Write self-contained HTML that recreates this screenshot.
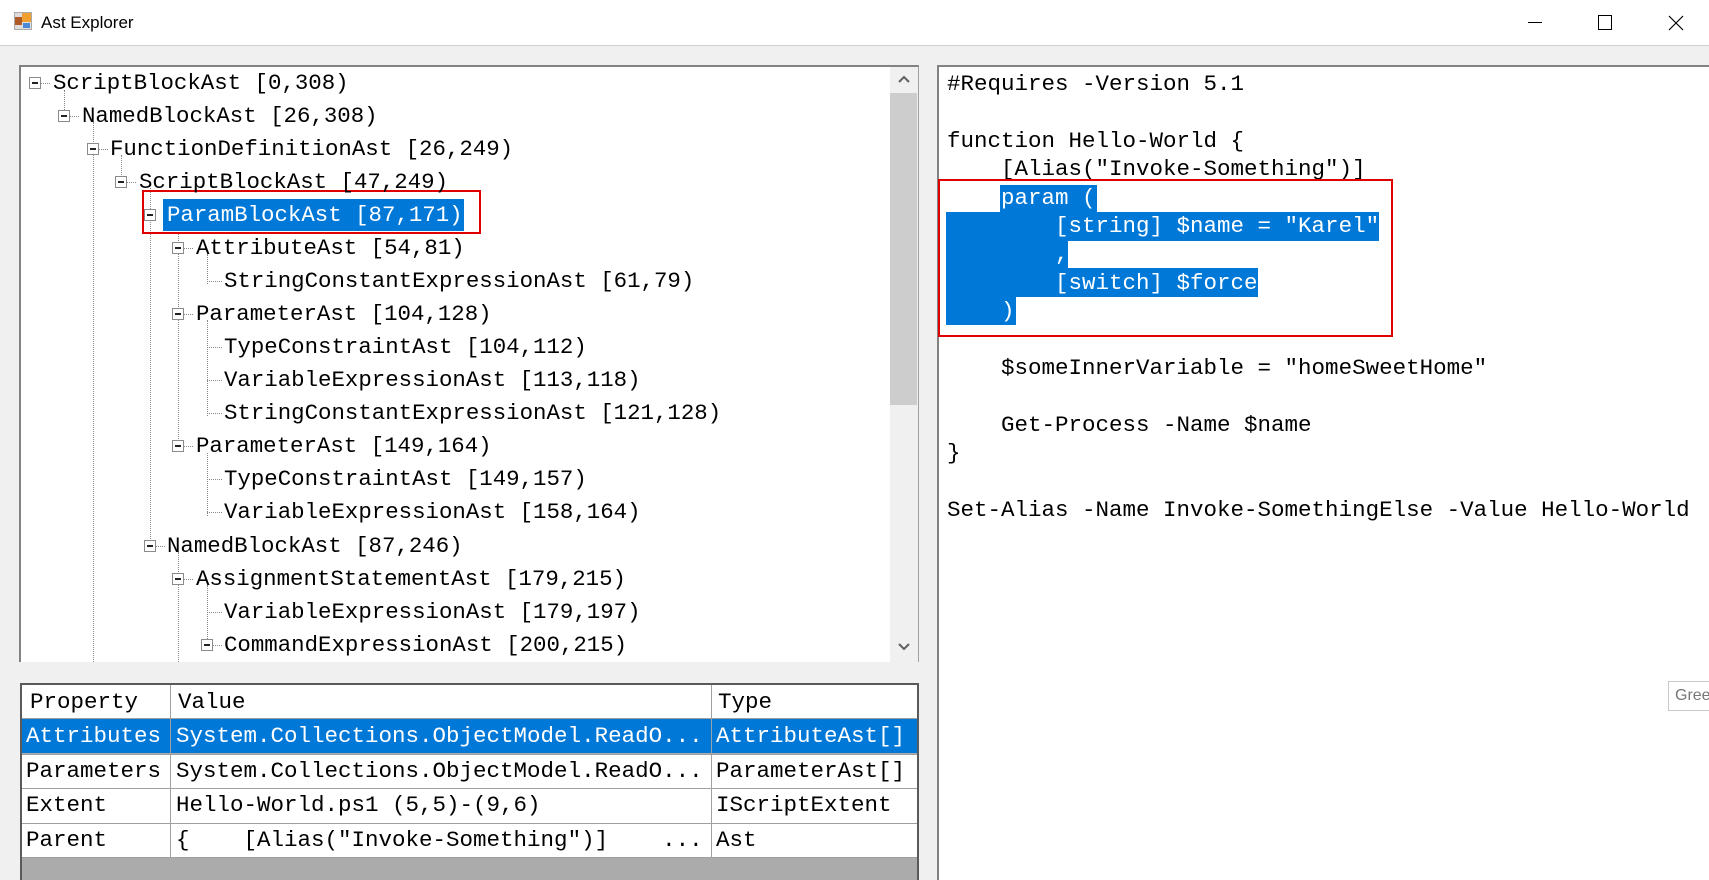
<!DOCTYPE html>
<html><head><meta charset="utf-8"><style>
*{margin:0;padding:0;box-sizing:border-box}
body{width:1709px;height:880px;overflow:hidden;background:#f0f0f0;font-family:"Liberation Mono",monospace;position:relative}
.abs{position:absolute}
#title{left:0;top:0;width:1709px;height:46px;background:#fff;border-bottom:1px solid #d0d0d0}
.t{position:absolute;white-space:pre;font-size:22.4px;height:33px;line-height:33px;color:#000}
.box{position:absolute;width:12px;height:12px;border:1px solid #8a8a8a;background:#fff}
.box:after{content:"";position:absolute;left:2px;top:4px;width:6px;height:2px;background:#222}
.h{position:absolute;height:0;border-top:1px dotted #888}
.v{position:absolute;width:0;border-left:1px dotted #888}
.e{position:absolute;white-space:pre;font-size:22.5px;line-height:28px;height:28px;left:947px;color:#000}
.sel{position:absolute;background:#0078d7}
.g{position:absolute;white-space:pre;font-size:22.5px;line-height:34px;color:#000}
</style></head><body>
<div id="title" class="abs">
 <div class="abs" style="left:14px;top:12px;width:18px;height:18px;background:#ddd;border:1px solid #aaa"></div>
 <div class="abs" style="left:15px;top:17px;width:7px;height:8px;background:#b05a2a"></div>
 <div class="abs" style="left:22px;top:13px;width:9px;height:9px;background:#f0a030"></div>
 <div class="abs" style="left:23px;top:23px;width:7px;height:5px;background:#4a8ad8"></div>
 <div class="abs" style="left:41px;top:12px;font-family:'Liberation Sans',sans-serif;font-size:17px;line-height:22px">Ast Explorer</div>
 <div class="abs" style="left:1528px;top:22px;width:14px;height:1px;background:#000"></div>
 <div class="abs" style="left:1598px;top:15px;width:14px;height:15px;border:1px solid #000"></div>
 <svg class="abs" style="left:1668px;top:15px" width="16" height="16"><path d="M1 1L15 15M15 1L1 15" stroke="#000" stroke-width="1.2"/></svg>
</div>

<div class="abs" style="left:19px;top:65px;width:900px;height:598px;background:#fff;border:1px solid #a0a0a0;border-top:2px solid #828282;border-left:2px solid #828282;overflow:hidden"></div>
<div class="abs" style="left:890px;top:67px;width:28px;height:595px;background:#f0f0f0"></div>
<div class="abs" style="left:890px;top:93px;width:27px;height:312px;background:#cdcdcd"></div>
<svg class="abs" style="left:897px;top:74px" width="14" height="10"><path d="M2 8L7 3L12 8" stroke="#606060" stroke-width="2" fill="none"/></svg>
<svg class="abs" style="left:897px;top:642px" width="14" height="10"><path d="M2 2L7 7L12 2" stroke="#606060" stroke-width="2" fill="none"/></svg>

<div class="v" style="left:64px;top:90px;height:26px"></div>
<div class="v" style="left:93px;top:122px;height:540px"></div>
<div class="v" style="left:121px;top:155px;height:26px"></div>
<div class="v" style="left:150px;top:188px;height:357px"></div>
<div class="v" style="left:178px;top:221px;height:228px"></div>
<div class="v" style="left:178px;top:552px;height:110px"></div>
<div class="v" style="left:207px;top:254px;height:30px"></div>
<div class="v" style="left:207px;top:320px;height:96px"></div>
<div class="v" style="left:207px;top:453px;height:63px"></div>
<div class="v" style="left:207px;top:585px;height:60px"></div>

<div class="sel" style="left:163px;top:199px;width:301px;height:32px"></div>
<div class="abs" style="left:142px;top:190px;width:339px;height:44px;border:2px solid #e00000"></div>

<div class="box" style="left:29px;top:77px"></div><div class="h" style="left:41px;top:83px;width:9px"></div><div class="t" style="left:53px;top:67px">ScriptBlockAst [0,308)</div>
<div class="box" style="left:58px;top:110px"></div><div class="h" style="left:70px;top:116px;width:9px"></div><div class="t" style="left:82px;top:100px">NamedBlockAst [26,308)</div>
<div class="box" style="left:87px;top:143px"></div><div class="h" style="left:99px;top:149px;width:9px"></div><div class="t" style="left:110px;top:133px">FunctionDefinitionAst [26,249)</div>
<div class="box" style="left:115px;top:176px"></div><div class="h" style="left:127px;top:182px;width:9px"></div><div class="t" style="left:139px;top:166px">ScriptBlockAst [47,249)</div>
<div class="box" style="left:144px;top:209px"></div><div class="t" style="left:167px;top:199px;color:#fff">ParamBlockAst [87,171)</div>
<div class="box" style="left:172px;top:242px"></div><div class="h" style="left:184px;top:248px;width:9px"></div><div class="t" style="left:196px;top:232px">AttributeAst [54,81)</div>
<div class="h" style="left:207px;top:281px;width:15px"></div><div class="t" style="left:224px;top:265px">StringConstantExpressionAst [61,79)</div>
<div class="box" style="left:172px;top:308px"></div><div class="h" style="left:184px;top:314px;width:9px"></div><div class="t" style="left:196px;top:298px">ParameterAst [104,128)</div>
<div class="h" style="left:207px;top:347px;width:15px"></div><div class="t" style="left:224px;top:331px">TypeConstraintAst [104,112)</div>
<div class="h" style="left:207px;top:380px;width:15px"></div><div class="t" style="left:224px;top:364px">VariableExpressionAst [113,118)</div>
<div class="h" style="left:207px;top:413px;width:15px"></div><div class="t" style="left:224px;top:397px">StringConstantExpressionAst [121,128)</div>
<div class="box" style="left:172px;top:440px"></div><div class="h" style="left:184px;top:446px;width:9px"></div><div class="t" style="left:196px;top:430px">ParameterAst [149,164)</div>
<div class="h" style="left:207px;top:479px;width:15px"></div><div class="t" style="left:224px;top:463px">TypeConstraintAst [149,157)</div>
<div class="h" style="left:207px;top:512px;width:15px"></div><div class="t" style="left:224px;top:496px">VariableExpressionAst [158,164)</div>
<div class="box" style="left:144px;top:540px"></div><div class="h" style="left:156px;top:546px;width:9px"></div><div class="t" style="left:167px;top:530px">NamedBlockAst [87,246)</div>
<div class="box" style="left:172px;top:573px"></div><div class="h" style="left:184px;top:579px;width:9px"></div><div class="t" style="left:196px;top:563px">AssignmentStatementAst [179,215)</div>
<div class="h" style="left:207px;top:612px;width:15px"></div><div class="t" style="left:224px;top:596px">VariableExpressionAst [179,197)</div>
<div class="box" style="left:201px;top:639px"></div><div class="h" style="left:213px;top:645px;width:9px"></div><div class="t" style="left:224px;top:629px">CommandExpressionAst [200,215)</div>
<div class="abs" style="left:19px;top:662px;width:900px;height:3px;background:#f0f0f0"></div>

<div class="abs" style="left:20px;top:683px;width:899px;height:197px;background:#ababab;border:2px solid #5a5a5a;border-bottom:none"></div>
<div class="abs" style="left:22px;top:685px;width:895px;height:34px;background:#fff;border-bottom:1px solid #a0a0a0"></div>
<div class="abs" style="left:22px;top:719px;width:895px;height:34px;background:#0078d7"></div>
<div class="abs" style="left:22px;top:754px;width:895px;height:34px;background:#fff;border-top:1px solid #a0a0a0"></div>
<div class="abs" style="left:22px;top:788px;width:895px;height:35px;background:#fff;border-top:1px solid #a0a0a0"></div>
<div class="abs" style="left:22px;top:823px;width:895px;height:35px;background:#fff;border-top:1px solid #a0a0a0;border-bottom:1px solid #a0a0a0"></div>
<div class="abs" style="left:170px;top:685px;width:1px;height:173px;background:#a0a0a0"></div>
<div class="abs" style="left:711px;top:685px;width:1px;height:173px;background:#a0a0a0"></div>
<div class="g" style="left:30px;top:685px">Property</div><div class="g" style="left:178px;top:685px">Value</div><div class="g" style="left:718px;top:685px">Type</div>
<div class="g" style="left:26px;top:719px;color:#fff">Attributes</div><div class="g" style="left:176px;top:719px;color:#fff">System.Collections.ObjectModel.ReadO...</div><div class="g" style="left:716px;top:719px;color:#fff">AttributeAst[]</div>
<div class="g" style="left:26px;top:754px">Parameters</div><div class="g" style="left:176px;top:754px">System.Collections.ObjectModel.ReadO...</div><div class="g" style="left:716px;top:754px">ParameterAst[]</div>
<div class="g" style="left:26px;top:788px">Extent</div><div class="g" style="left:176px;top:788px">Hello-World.ps1 (5,5)-(9,6)</div><div class="g" style="left:716px;top:788px">IScriptExtent</div>
<div class="g" style="left:26px;top:823px">Parent</div><div class="g" style="left:176px;top:823px">{    [Alias("Invoke-Something")]    ...</div><div class="g" style="left:716px;top:823px">Ast</div>

<div class="abs" style="left:937px;top:65px;width:772px;height:815px;background:#fff;border-top:2px solid #828282;border-left:2px solid #828282"></div>
<div class="sel" style="left:1000px;top:185px;width:97px;height:28px"></div>
<div class="sel" style="left:946px;top:212px;width:433px;height:29px"></div>
<div class="sel" style="left:946px;top:240px;width:122px;height:29px"></div>
<div class="sel" style="left:946px;top:268px;width:312px;height:29px"></div>
<div class="sel" style="left:946px;top:296px;width:70px;height:29px"></div>
<div class="e" style="top:70px">#Requires -Version 5.1</div>
<div class="e" style="top:127px">function Hello-World {</div>
<div class="e" style="top:155px">    [Alias("Invoke-Something")]</div>
<div class="e" style="top:184px;color:#fff">    param (</div>
<div class="e" style="top:212px;color:#fff">        [string] $name = "Karel"</div>
<div class="e" style="top:240px;color:#fff">        ,</div>
<div class="e" style="top:269px;color:#fff">        [switch] $force</div>
<div class="e" style="top:297px;color:#fff">    )</div>
<div class="e" style="top:354px">    $someInnerVariable = "homeSweetHome"</div>
<div class="e" style="top:411px">    Get-Process -Name $name</div>
<div class="e" style="top:439px">}</div>
<div class="e" style="top:496px">Set-Alias -Name Invoke-SomethingElse -Value Hello-World</div>
<div class="abs" style="left:938px;top:179px;width:455px;height:158px;border:2px solid #e00000"></div>
<div class="abs" style="left:1668px;top:681px;width:45px;height:30px;background:#fff;border:1px solid #c8c8c8;font-family:'Liberation Sans',sans-serif;font-size:16px;line-height:28px;color:#777;padding-left:6px;overflow:hidden">Gree</div>
</body></html>
